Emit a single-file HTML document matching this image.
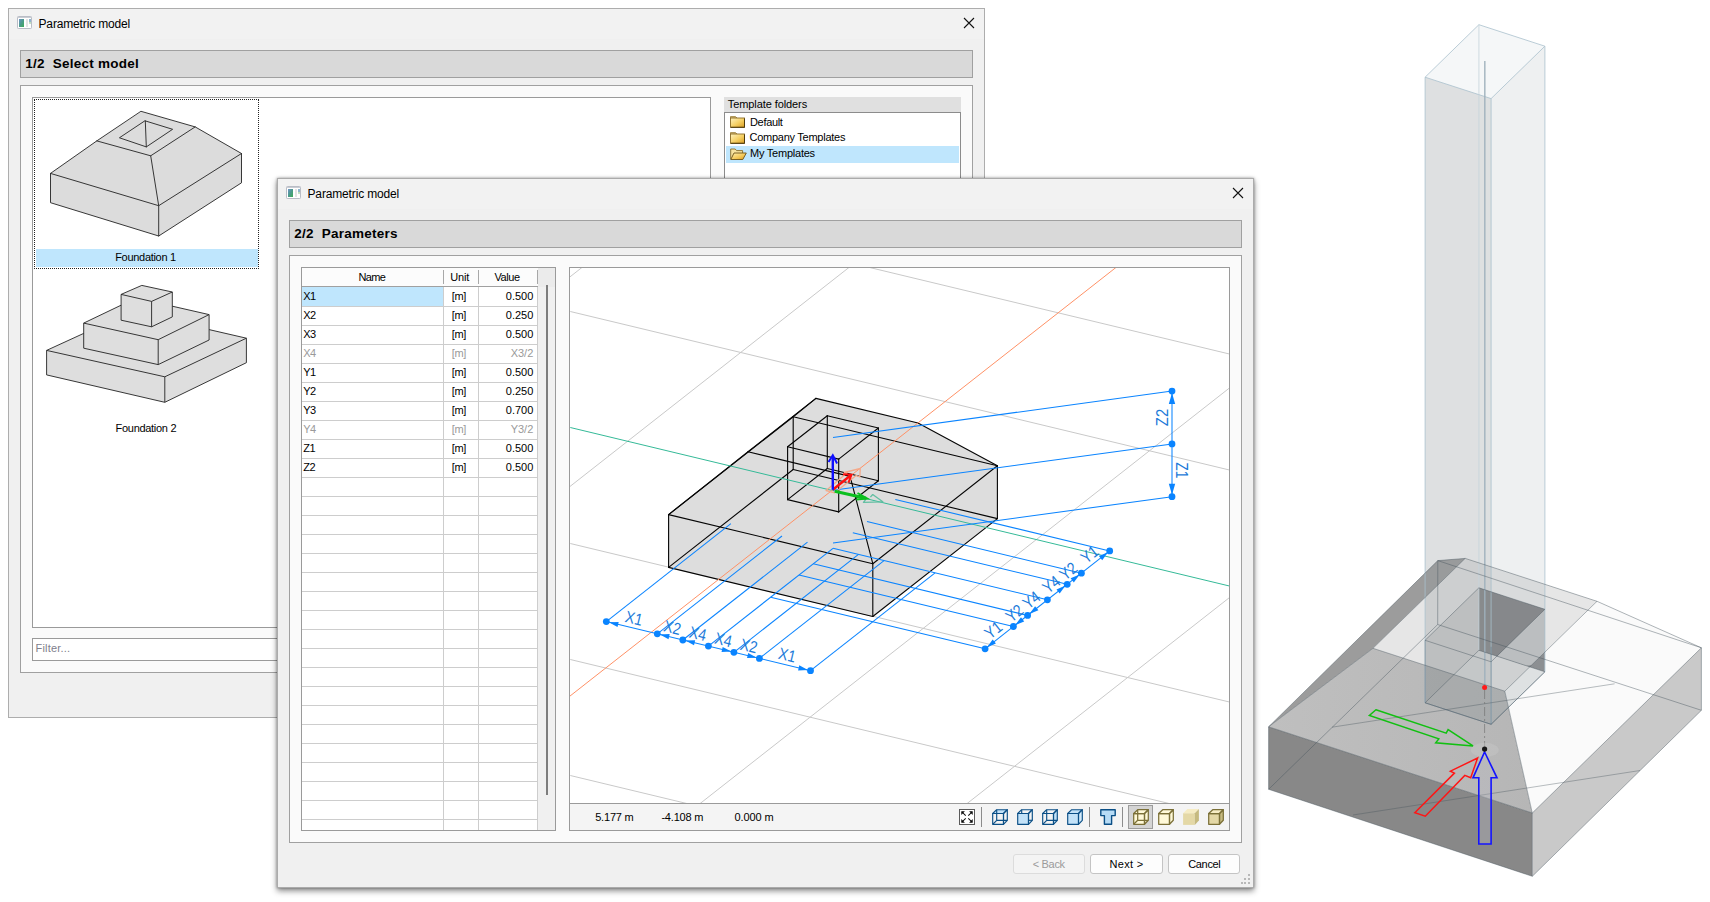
<!DOCTYPE html><html><head><meta charset="utf-8"><title>Parametric model</title><style>
*{box-sizing:border-box;margin:0;padding:0}
html,body{width:1710px;height:902px;overflow:hidden;background:#fff}
body{position:relative;font-family:"Liberation Sans",sans-serif;font-size:11px;color:#000}
.abs{position:absolute}
.dlg{position:absolute;width:977px;height:710px;background:#f0f0f0;border:1px solid #adadad}
.dlg .tb{position:absolute;left:0;top:0;width:975px;height:30px;background:#f2f2f2}
.dlg .ttl{position:absolute;left:29.5px;top:7.7px;font-size:12px;line-height:14px;letter-spacing:-0.15px;color:#000;white-space:nowrap}
.dlg .cls{position:absolute;left:954px;top:9px;width:12px;height:12px}
.hdr{position:absolute;left:11px;top:41px;width:953px;height:28px;background:#d9d9d9;border:1px solid #a0a0a0}
.hdr span{position:absolute;left:4.3px;top:4.5px;font-size:13.5px;line-height:16px;font-weight:bold;white-space:pre;letter-spacing:0.25px}
.grp{position:absolute;left:11px;top:76px;width:953px;height:588px;background:#fafafa;border:1px solid #a0a0a0}
.t{position:absolute;white-space:pre;line-height:13px;font-size:11px}
.btn{position:absolute;top:675px;width:72.3px;height:20px;border:1px solid #c4c4c4;border-radius:3px;background:#fdfdfd;text-align:center;line-height:18px;font-size:11px}
</style></head><body><div class="dlg" style="left:8px;top:8px"><div class="tb"></div><svg class="abs" style="left:8px;top:7px" width="16" height="14" viewBox="0 0 16 14"><defs><linearGradient id="ig1" x1="0" y1="0" x2="1" y2="1"><stop offset="0" stop-color="#6f92c6"/><stop offset="0.5" stop-color="#4b9a8c"/><stop offset="1" stop-color="#3fae55"/></linearGradient></defs><rect x="0.5" y="0.5" width="14" height="12" rx="0.8" fill="#fff" stroke="#b9bdc6"/><rect x="1" y="1" width="13" height="1" fill="#c9ccd3"/><rect x="2" y="3" width="5" height="8" fill="url(#ig1)"/><rect x="9" y="3" width="2" height="8" fill="#e4e4e4"/><rect x="12" y="3" width="2" height="4.5" fill="#8fb4cf"/><rect x="12" y="6" width="2" height="1.5" fill="#bfe3b4"/></svg><div class="ttl">Parametric model</div><svg class="cls" style="top:8px" viewBox="0 0 12 12"><path d="M1 1 L11 11 M11 1 L1 11" stroke="#111" stroke-width="1.08" fill="none"/></svg><div class="hdr"><span>1/2  Select model</span></div><div class="grp"></div><div class="abs" style="left:23px;top:88px;width:679px;height:531px;background:#fff;border:1px solid #9a9a9a"></div><div class="abs" style="left:27px;top:240px;width:221.5px;height:18px;background:#bfe6fd"></div><div class="abs" style="left:25px;top:90px;width:225px;height:170px;border:1px dotted #222"></div><div class="t" style="left:106.2px;top:242.3px;letter-spacing:-0.3px">Foundation 1</div><div class="t" style="left:106.6px;top:412.6px;letter-spacing:-0.3px">Foundation 2</div><svg class="abs" style="left:0;top:0" width="300" height="420"><polygon points="132.3,102.4 186.2,117.9 232.5,144.5 232.5,173.8 149.7,227.0 41.5,193.7 41.5,164.4 87.8,131.9" fill="#dcdcdc"/><g fill="none" stroke="#222" stroke-width="0.9" stroke-linejoin="round" stroke-linecap="round"><polygon points="132.3,102.4 186.2,117.9 232.5,144.5 232.5,173.8 149.7,227.0 41.5,193.7 41.5,164.4 87.8,131.9"/><polyline points="87.8,131.9 141.7,146.8 186.2,117.9"/><polyline points="41.5,164.4 149.7,196.7 232.5,144.5"/><polyline points="141.7,146.8 149.7,196.7 149.7,227.0"/><polygon points="136.3,111.9 163.6,120.3 137.3,137.9 110.8,128.9"/><polyline points="136.3,111.9 137.3,137.9"/></g><g fill="#dedede" stroke="#222" stroke-width="0.9" stroke-linejoin="round"><polygon points="37.6,341.4 74.7,324.4 200.1,320.6 237.4,329.2 237.4,353.7 155.8,393.3 37.6,365.9"/><polyline fill="none" points="37.6,341.4 155.8,367.8 237.4,329.2"/><polyline fill="none" points="155.8,367.8 155.8,393.3"/><polygon points="74.7,314.1 112.1,296.2 163.3,297.2 200.1,305.6 200.1,331.0 149.2,355.6 74.7,339.2"/><polyline fill="none" points="74.7,314.1 149.2,330.7 200.1,305.6"/><polyline fill="none" points="149.2,330.7 149.2,355.6"/><polygon points="112.1,285.4 132.8,276.4 163.3,283.0 163.3,307.9 142.6,317.8 112.1,311.2"/><polyline fill="none" points="112.1,285.4 142.6,292.4 163.3,283.0"/><polyline fill="none" points="142.6,292.4 142.6,317.8"/></g></svg><div class="abs" style="left:23px;top:629px;width:679px;height:23px;background:#fff;border:1px solid #9a9a9a"></div><div class="t" style="left:26.5px;top:632.8px;color:#80808c;letter-spacing:0.2px">Filter...</div><div class="abs" style="left:715px;top:88px;width:237px;height:16px;background:#e0e0e0"></div><div class="t" style="left:718.8px;top:89.4px;letter-spacing:-0.09px">Template folders</div><div class="abs" style="left:715px;top:103px;width:237px;height:200px;background:#fff;border:1px solid #8c8c8c"></div><div class="abs" style="left:717px;top:137px;width:233px;height:17px;background:#bfe6fd"></div><svg class="abs" style="left:720.5px;top:106.3px" width="16" height="14" viewBox="0 0 16 14"><defs><linearGradient id="fg1" x1="0" y1="0" x2="1" y2="1"><stop offset="0" stop-color="#fff3bf"/><stop offset="0.55" stop-color="#f5cf62"/><stop offset="1" stop-color="#d99d22"/></linearGradient></defs><path d="M0.5 1.5 L5.5 1.5 L7 3 L0.5 3 Z" fill="#f3dc9a" stroke="#9c8140" stroke-width="0.8"/><rect x="0.5" y="3" width="14" height="9.3" fill="url(#fg1)" stroke="#8a6b24" stroke-width="0.9"/><path d="M0.8 12.3 L14.5 12.3 M14.5 3.5 L14.5 12.3" stroke="#4e3a0c" stroke-width="1"/></svg><svg class="abs" style="left:720.5px;top:122.1px" width="16" height="14" viewBox="0 0 16 14"><defs><linearGradient id="fg2" x1="0" y1="0" x2="1" y2="1"><stop offset="0" stop-color="#fff3bf"/><stop offset="0.55" stop-color="#f5cf62"/><stop offset="1" stop-color="#d99d22"/></linearGradient></defs><path d="M0.5 1.5 L5.5 1.5 L7 3 L0.5 3 Z" fill="#f3dc9a" stroke="#9c8140" stroke-width="0.8"/><rect x="0.5" y="3" width="14" height="9.3" fill="url(#fg2)" stroke="#8a6b24" stroke-width="0.9"/><path d="M0.8 12.3 L14.5 12.3 M14.5 3.5 L14.5 12.3" stroke="#4e3a0c" stroke-width="1"/></svg><svg class="abs" style="left:720.5px;top:137.9px" width="17" height="14" viewBox="0 0 17 14"><defs><linearGradient id="fg3" x1="0" y1="0" x2="1" y2="1"><stop offset="0" stop-color="#fff0b0"/><stop offset="0.6" stop-color="#f3c654"/><stop offset="1" stop-color="#d3941c"/></linearGradient></defs><path d="M0.7 12.3 L0.7 2 L5.2 2 L6.6 3.6 L12.6 3.6 L12.6 6" fill="#f7e3a0" stroke="#8a6b24" stroke-width="0.9"/><path d="M0.8 12.5 L4 6 L16.3 6 L12.8 12.5 Z" fill="url(#fg3)" stroke="#6e5216" stroke-width="0.9"/></svg><div class="t" style="left:741px;top:106.5px;letter-spacing:-0.33px">Default</div><div class="t" style="left:740.5px;top:122.30000000000001px;letter-spacing:-0.26px">Company Templates</div><div class="t" style="left:741px;top:138.1px;letter-spacing:-0.23px">My Templates</div></div><svg class="abs" style="left:1255px;top:0" width="455" height="902" viewBox="1255 0 455 902"><defs><linearGradient id="f7g" x1="0" y1="0" x2="1" y2="0"><stop offset="0" stop-color="#e4e4e4"/><stop offset="0.6" stop-color="#f6f6f6"/><stop offset="1" stop-color="#fdfdfd"/></linearGradient><linearGradient id="f3g" x1="0" y1="0" x2="1" y2="0"><stop offset="0" stop-color="#bfbfbf"/><stop offset="1" stop-color="#b6b6b6"/></linearGradient></defs><polygon points="1437.8,560.6 1701.4,647.8 1597.0,601.3 1465.2,558.4" fill="url(#f7g)" /><polygon points="1268.6,726.8 1437.8,560.6 1465.2,558.4 1373.0,648.3" fill="#9c9c9c" /><polygon points="1373.0,648.3 1504.8,691.2 1597.0,601.3 1465.2,558.4" fill="#e6e6e6" /><polygon points="1268.6,726.8 1373.0,648.3 1504.8,691.2 1532.3,813.0" fill="url(#f3g)" /><polygon points="1532.3,813.0 1504.8,691.2 1597.0,601.3 1701.4,647.8" fill="#fafafa" /><polygon points="1268.6,726.8 1532.3,813.0 1532.3,876.3 1268.6,789.3" fill="#888888" /><polygon points="1532.3,813.0 1701.4,647.8 1701.4,710.3 1532.3,876.3" fill="#c9c9c9" /><polygon points="1425.1,640.3 1478.9,587.8 1478.9,650.3 1425.1,702.8" fill="rgba(96,100,102,0.17)" /><polygon points="1478.9,587.8 1544.9,609.3 1544.9,671.8 1478.9,650.3" fill="rgba(58,60,64,0.58)" /><polygon points="1497.0,656.3 1544.9,609.3 1544.9,652.2 1531.5,665.3 1525.8,665.7" fill="rgba(255,255,255,0.52)" /><polygon points="1425.1,702.8 1491.1,724.3 1544.9,671.8 1478.9,650.3" fill="rgba(120,124,126,0.10)" /><polygon points="1425.1,702.8 1491.1,724.3 1491.1,98.6 1425.1,77.2" fill="rgba(150,155,158,0.31)" /><polygon points="1491.1,724.3 1544.9,671.8 1544.9,46.2 1491.1,98.6" fill="rgba(150,162,166,0.16)" /><polygon points="1425.1,77.2 1491.1,98.6 1544.9,46.2 1478.9,24.7" fill="rgba(160,185,190,0.11)" /><g stroke="#a9c0cd" stroke-width="0.8" fill="none"><line x1="1425.1" y1="702.8" x2="1425.1" y2="77.2"/><line x1="1491.1" y1="724.3" x2="1491.1" y2="98.6"/><line x1="1544.9" y1="671.8" x2="1544.9" y2="46.2"/><line x1="1425.1" y1="77.2" x2="1491.1" y2="98.6"/><line x1="1491.1" y1="98.6" x2="1544.9" y2="46.2"/><line x1="1544.9" y1="46.2" x2="1478.9" y2="24.7"/><line x1="1478.9" y1="24.7" x2="1425.1" y2="77.2"/></g><g stroke="#c4d3db" stroke-width="0.8" fill="none"><line x1="1478.9" y1="650.3" x2="1478.9" y2="24.7"/></g><line x1="1484.8" y1="61" x2="1484.8" y2="687" stroke="#9fb1bd" stroke-width="1.6" opacity="0.85"/><g stroke="rgba(70,84,92,0.62)" stroke-width="0.7" fill="none"><line x1="1268.6" y1="789.3" x2="1532.3" y2="876.3"/><line x1="1268.6" y1="726.8" x2="1532.3" y2="813.0"/><line x1="1532.3" y1="876.3" x2="1701.4" y2="710.3"/><line x1="1532.3" y1="813.0" x2="1701.4" y2="647.8"/><line x1="1701.4" y1="710.3" x2="1437.7" y2="624.5"/><line x1="1701.4" y1="647.8" x2="1437.8" y2="560.6"/><line x1="1437.7" y1="624.5" x2="1268.6" y2="789.3"/><line x1="1437.8" y1="560.6" x2="1268.6" y2="726.8"/><line x1="1268.6" y1="789.3" x2="1268.6" y2="726.8"/><line x1="1532.3" y1="876.3" x2="1532.3" y2="813.0"/><line x1="1701.4" y1="710.3" x2="1701.4" y2="647.8"/><line x1="1437.7" y1="624.5" x2="1437.8" y2="560.6"/><line x1="1373.0" y1="648.3" x2="1504.8" y2="691.2"/><line x1="1504.8" y1="691.2" x2="1597.0" y2="601.3"/><line x1="1597.0" y1="601.3" x2="1465.2" y2="558.4"/><line x1="1465.2" y1="558.4" x2="1373.0" y2="648.3"/><line x1="1268.6" y1="726.8" x2="1373.0" y2="648.3"/><line x1="1532.3" y1="813.0" x2="1504.8" y2="691.2"/><line x1="1701.4" y1="647.8" x2="1597.0" y2="601.3"/><line x1="1437.8" y1="560.6" x2="1465.2" y2="558.4"/><line x1="1425.1" y1="702.8" x2="1491.1" y2="724.3"/><line x1="1425.1" y1="640.3" x2="1491.1" y2="661.8"/><line x1="1491.1" y1="724.3" x2="1544.9" y2="671.8"/><line x1="1491.1" y1="661.8" x2="1544.9" y2="609.3"/><line x1="1544.9" y1="671.8" x2="1478.9" y2="650.3"/><line x1="1544.9" y1="609.3" x2="1478.9" y2="587.8"/><line x1="1478.9" y1="650.3" x2="1425.1" y2="702.8"/><line x1="1478.9" y1="587.8" x2="1425.1" y2="640.3"/></g><g stroke="rgba(70,84,92,0.55)" stroke-width="0.7" fill="none"><line x1="1332.0" y1="727.2" x2="1614.6" y2="683.8"/><line x1="1353.0" y1="815.0" x2="1640.0" y2="770.5"/></g><g stroke="rgba(80,104,120,0.55)" stroke-width="0.8" fill="none"><line x1="1425.1" y1="702.8" x2="1491.1" y2="724.3"/><line x1="1491.1" y1="724.3" x2="1544.9" y2="671.8"/><line x1="1491.1" y1="724.3" x2="1491.1" y2="646.8"/><line x1="1425.1" y1="702.8" x2="1425.1" y2="640.3"/></g><line x1="1484.6" y1="690" x2="1484.6" y2="747" stroke="#777" stroke-width="0.9" stroke-dasharray="9 3 2 3" opacity="0.8"/><ellipse cx="1484.8" cy="750" rx="14" ry="7.2" fill="rgba(200,200,200,0.42)"/><polygon points="1375.9,709.8 1446.2,733.1 1448.1,729.6 1473,745.9 1435.7,742.8 1438.8,738.9 1369.4,715.4" fill="none" stroke="#11c011" stroke-width="1.5" stroke-linejoin="miter"/><polygon points="1414.8,812.7 1454.4,773.1 1450.4,771.2 1477.6,758 1470.7,777.8 1464.8,775.4 1425.3,816.2" fill="none" stroke="#ff1515" stroke-width="1.5"/><polygon points="1484.6,752 1497,777.8 1491.1,777.8 1491.1,844 1478.8,844 1478.8,777.8 1473,777.8" fill="rgba(185,185,195,0.35)" stroke="#1414ff" stroke-width="1.6"/><circle cx="1484.6" cy="749.1" r="2.6" fill="#181818"/><circle cx="1484.6" cy="687.4" r="2.5" fill="#ff1a1a"/></svg><div class="dlg" style="left:277px;top:178px;border-color:#ababab;box-shadow:0 3px 6px 0 rgba(0,0,0,0.45), 0 0 2.5px rgba(0,0,0,0.35)"><div class="tb"></div><svg class="abs" style="left:8px;top:7px" width="16" height="14" viewBox="0 0 16 14"><defs><linearGradient id="ig2" x1="0" y1="0" x2="1" y2="1"><stop offset="0" stop-color="#6f92c6"/><stop offset="0.5" stop-color="#4b9a8c"/><stop offset="1" stop-color="#3fae55"/></linearGradient></defs><rect x="0.5" y="0.5" width="14" height="12" rx="0.8" fill="#fff" stroke="#b9bdc6"/><rect x="1" y="1" width="13" height="1" fill="#c9ccd3"/><rect x="2" y="3" width="5" height="8" fill="url(#ig2)"/><rect x="9" y="3" width="2" height="8" fill="#e4e4e4"/><rect x="12" y="3" width="2" height="4.5" fill="#8fb4cf"/><rect x="12" y="6" width="2" height="1.5" fill="#bfe3b4"/></svg><div class="ttl">Parametric model</div><svg class="cls" style="top:8px" viewBox="0 0 12 12"><path d="M1 1 L11 11 M11 1 L1 11" stroke="#111" stroke-width="1.08" fill="none"/></svg><div class="hdr"><span>2/2  Parameters</span></div><div class="grp"></div><div class="abs" style="left:23px;top:88px;width:255px;height:564px;background:#fff;border:1px solid #9a9a9a"></div><div class="abs" style="left:24px;top:89px;width:236px;height:18px;background:#fcfcfc"></div><div class="abs" style="left:260px;top:89px;width:17px;height:19px;background:#ebebeb"></div><div class="abs" style="left:260px;top:108px;width:17px;height:543px;background:#f0f0f0"></div><div class="abs" style="left:24px;top:107px;width:236px;height:1px;background:#a0a0a0"></div><div class="abs" style="left:165px;top:91px;width:1px;height:14px;background:#a8a8a8"></div><div class="abs" style="left:200px;top:91px;width:1px;height:14px;background:#a8a8a8"></div><div class="abs" style="left:259px;top:91px;width:1px;height:14px;background:#a8a8a8"></div><div class="abs" style="left:24px;top:108px;width:141px;height:19px;background:#bfe6fd"></div><div class="abs" style="left:24px;top:127px;width:236px;height:1px;background:#cdcdcd"></div><div class="abs" style="left:24px;top:146px;width:236px;height:1px;background:#cdcdcd"></div><div class="abs" style="left:24px;top:165px;width:236px;height:1px;background:#cdcdcd"></div><div class="abs" style="left:24px;top:184px;width:236px;height:1px;background:#cdcdcd"></div><div class="abs" style="left:24px;top:203px;width:236px;height:1px;background:#cdcdcd"></div><div class="abs" style="left:24px;top:222px;width:236px;height:1px;background:#cdcdcd"></div><div class="abs" style="left:24px;top:241px;width:236px;height:1px;background:#cdcdcd"></div><div class="abs" style="left:24px;top:260px;width:236px;height:1px;background:#cdcdcd"></div><div class="abs" style="left:24px;top:279px;width:236px;height:1px;background:#cdcdcd"></div><div class="abs" style="left:24px;top:298px;width:236px;height:1px;background:#cdcdcd"></div><div class="abs" style="left:24px;top:317px;width:236px;height:1px;background:#cdcdcd"></div><div class="abs" style="left:24px;top:336px;width:236px;height:1px;background:#cdcdcd"></div><div class="abs" style="left:24px;top:355px;width:236px;height:1px;background:#cdcdcd"></div><div class="abs" style="left:24px;top:374px;width:236px;height:1px;background:#cdcdcd"></div><div class="abs" style="left:24px;top:393px;width:236px;height:1px;background:#cdcdcd"></div><div class="abs" style="left:24px;top:412px;width:236px;height:1px;background:#cdcdcd"></div><div class="abs" style="left:24px;top:431px;width:236px;height:1px;background:#cdcdcd"></div><div class="abs" style="left:24px;top:450px;width:236px;height:1px;background:#cdcdcd"></div><div class="abs" style="left:24px;top:469px;width:236px;height:1px;background:#cdcdcd"></div><div class="abs" style="left:24px;top:488px;width:236px;height:1px;background:#cdcdcd"></div><div class="abs" style="left:24px;top:507px;width:236px;height:1px;background:#cdcdcd"></div><div class="abs" style="left:24px;top:526px;width:236px;height:1px;background:#cdcdcd"></div><div class="abs" style="left:24px;top:545px;width:236px;height:1px;background:#cdcdcd"></div><div class="abs" style="left:24px;top:564px;width:236px;height:1px;background:#cdcdcd"></div><div class="abs" style="left:24px;top:583px;width:236px;height:1px;background:#cdcdcd"></div><div class="abs" style="left:24px;top:602px;width:236px;height:1px;background:#cdcdcd"></div><div class="abs" style="left:24px;top:621px;width:236px;height:1px;background:#cdcdcd"></div><div class="abs" style="left:24px;top:640px;width:236px;height:1px;background:#cdcdcd"></div><div class="abs" style="left:165px;top:108px;width:1px;height:543px;background:#cdcdcd"></div><div class="abs" style="left:200px;top:108px;width:1px;height:543px;background:#cdcdcd"></div><div class="abs" style="left:259px;top:108px;width:1px;height:543px;background:#cdcdcd"></div><div class="abs" style="left:268px;top:106px;width:2px;height:510px;background:#7d7d7d"></div><div class="t" style="left:80.39999999999998px;top:91.60000000000002px;letter-spacing:-0.6px">Name</div><div class="t" style="left:172.2px;top:91.60000000000002px;letter-spacing:-0.15px">Unit</div><div class="t" style="left:216.39999999999998px;top:91.60000000000002px;letter-spacing:-0.4px">Value</div><div class="t" style="left:25.30000000000001px;top:110.60000000000002px;letter-spacing:-0.55px">X1</div><div class="t" style="left:173.8px;top:110.60000000000002px;letter-spacing:-0.33px">[m]</div><div class="t" style="left:200px;top:110.60000000000002px;width:55.3px;text-align:right;letter-spacing:0px">0.500</div><div class="t" style="left:25.30000000000001px;top:129.60000000000002px;letter-spacing:-0.55px">X2</div><div class="t" style="left:173.8px;top:129.60000000000002px;letter-spacing:-0.33px">[m]</div><div class="t" style="left:200px;top:129.60000000000002px;width:55.3px;text-align:right;letter-spacing:0px">0.250</div><div class="t" style="left:25.30000000000001px;top:148.60000000000002px;letter-spacing:-0.55px">X3</div><div class="t" style="left:173.8px;top:148.60000000000002px;letter-spacing:-0.33px">[m]</div><div class="t" style="left:200px;top:148.60000000000002px;width:55.3px;text-align:right;letter-spacing:0px">0.500</div><div class="t" style="left:25.30000000000001px;top:167.60000000000002px;color:#9a9a9a;letter-spacing:-0.55px">X4</div><div class="t" style="left:173.8px;top:167.60000000000002px;color:#9a9a9a;letter-spacing:-0.33px">[m]</div><div class="t" style="left:200px;top:167.60000000000002px;width:55.3px;text-align:right;color:#9a9a9a;letter-spacing:0px">X3/2</div><div class="t" style="left:25.30000000000001px;top:186.60000000000002px;letter-spacing:-0.55px">Y1</div><div class="t" style="left:173.8px;top:186.60000000000002px;letter-spacing:-0.33px">[m]</div><div class="t" style="left:200px;top:186.60000000000002px;width:55.3px;text-align:right;letter-spacing:0px">0.500</div><div class="t" style="left:25.30000000000001px;top:205.60000000000002px;letter-spacing:-0.55px">Y2</div><div class="t" style="left:173.8px;top:205.60000000000002px;letter-spacing:-0.33px">[m]</div><div class="t" style="left:200px;top:205.60000000000002px;width:55.3px;text-align:right;letter-spacing:0px">0.250</div><div class="t" style="left:25.30000000000001px;top:224.60000000000002px;letter-spacing:-0.55px">Y3</div><div class="t" style="left:173.8px;top:224.60000000000002px;letter-spacing:-0.33px">[m]</div><div class="t" style="left:200px;top:224.60000000000002px;width:55.3px;text-align:right;letter-spacing:0px">0.700</div><div class="t" style="left:25.30000000000001px;top:243.60000000000002px;color:#9a9a9a;letter-spacing:-0.55px">Y4</div><div class="t" style="left:173.8px;top:243.60000000000002px;color:#9a9a9a;letter-spacing:-0.33px">[m]</div><div class="t" style="left:200px;top:243.60000000000002px;width:55.3px;text-align:right;color:#9a9a9a;letter-spacing:0px">Y3/2</div><div class="t" style="left:25.30000000000001px;top:262.6px;letter-spacing:-0.55px">Z1</div><div class="t" style="left:173.8px;top:262.6px;letter-spacing:-0.33px">[m]</div><div class="t" style="left:200px;top:262.6px;width:55.3px;text-align:right;letter-spacing:0px">0.500</div><div class="t" style="left:25.30000000000001px;top:281.6px;letter-spacing:-0.55px">Z2</div><div class="t" style="left:173.8px;top:281.6px;letter-spacing:-0.33px">[m]</div><div class="t" style="left:200px;top:281.6px;width:55.3px;text-align:right;letter-spacing:0px">0.500</div><div class="abs" style="left:291px;top:88px;width:661px;height:564px;background:#fff;border:1px solid #9a9a9a"></div><svg class="abs" style="left:292px;top:89px" width="659" height="535" viewBox="570 268 659 535"><g stroke="#c9c9c9" stroke-width="1" fill="none"><line x1="570.3" y1="195.5" x2="1229.4" y2="354.0" /><line x1="570.3" y1="311.5" x2="1229.4" y2="470.0" /><line x1="570.3" y1="543.5" x2="1229.4" y2="702.0" /><line x1="570.3" y1="659.5" x2="1229.4" y2="818.0" /><line x1="570.3" y1="775.5" x2="1229.4" y2="934.0" /><line x1="560.0" y1="284.7" x2="1240.0" y2="-249.1" /><line x1="560.0" y1="494.3" x2="1240.0" y2="-39.5" /><line x1="560.0" y1="913.5" x2="1240.0" y2="379.7" /><line x1="560.0" y1="1123.1" x2="1240.0" y2="589.3" /></g><polygon points="668.6,567.4 872.8,616.5 997.4,518.6 997.4,465.8 918.0,423.0 815.9,398.4 748.0,451.8 668.6,514.6" fill="#dddddd"/><g stroke="#050505" stroke-width="1.12" fill="none" stroke-linecap="round"><line x1="668.6" y1="567.4" x2="872.8" y2="616.5" /><line x1="668.6" y1="514.6" x2="872.8" y2="563.7" /><line x1="872.8" y1="616.5" x2="997.4" y2="518.6" /><line x1="872.8" y1="563.7" x2="997.4" y2="465.8" /><line x1="997.4" y1="518.6" x2="793.2" y2="469.5" /><line x1="997.4" y1="465.8" x2="793.2" y2="416.7" /><line x1="793.2" y1="469.5" x2="668.6" y2="567.4" /><line x1="793.2" y1="416.7" x2="668.6" y2="514.6" /><line x1="668.6" y1="567.4" x2="668.6" y2="514.6" /><line x1="872.8" y1="616.5" x2="872.8" y2="563.7" /><line x1="997.4" y1="518.6" x2="997.4" y2="465.8" /><line x1="793.2" y1="469.5" x2="793.2" y2="416.7" /><line x1="748.0" y1="451.8" x2="850.1" y2="476.4" /><line x1="918.0" y1="423.0" x2="815.9" y2="398.4" /><line x1="815.9" y1="398.4" x2="748.0" y2="451.8" /><line x1="668.6" y1="514.6" x2="748.0" y2="451.8" /><line x1="872.8" y1="563.7" x2="850.1" y2="476.4" /><line x1="997.4" y1="465.8" x2="918.0" y2="423.0" /><line x1="793.2" y1="416.7" x2="815.9" y2="398.4" /><line x1="787.6" y1="499.6" x2="838.7" y2="511.9" /><line x1="787.6" y1="446.8" x2="838.7" y2="459.1" /><line x1="787.6" y1="499.6" x2="787.6" y2="446.8" /><line x1="838.7" y1="511.9" x2="878.4" y2="480.8" /><line x1="838.7" y1="459.1" x2="878.4" y2="428.0" /><line x1="838.7" y1="511.9" x2="838.7" y2="459.1" /><line x1="878.4" y1="480.8" x2="827.3" y2="468.5" /><line x1="878.4" y1="428.0" x2="827.3" y2="415.7" /><line x1="878.4" y1="480.8" x2="878.4" y2="428.0" /><line x1="827.3" y1="468.5" x2="787.6" y2="499.6" /><line x1="827.3" y1="415.7" x2="787.6" y2="446.8" /><line x1="827.3" y1="468.5" x2="827.3" y2="415.7" /></g><line x1="570.3" y1="427.5" x2="1229.4" y2="586.0" stroke="#35ba98" stroke-width="1.0"/><line x1="560.0" y1="703.9" x2="1240.0" y2="170.1" stroke="#ff9166" stroke-width="1.0"/><g stroke="#0a84ff" stroke-width="1.05" fill="none"><line x1="606.3" y1="621.6" x2="730.9" y2="523.7" /><line x1="657.3" y1="633.8" x2="782.0" y2="536.0" /><line x1="682.8" y1="640.0" x2="807.5" y2="542.1" /><line x1="708.4" y1="646.1" x2="833.0" y2="548.3" /><line x1="733.9" y1="652.3" x2="858.5" y2="554.4" /><line x1="759.4" y1="658.4" x2="884.0" y2="560.6" /><line x1="810.5" y1="670.7" x2="935.1" y2="572.8" /><line x1="985.1" y1="648.8" x2="770.7" y2="597.2" /><line x1="1013.4" y1="626.5" x2="799.0" y2="575.0" /><line x1="1027.6" y1="615.4" x2="813.2" y2="563.8" /><line x1="1047.4" y1="599.8" x2="833.0" y2="548.3" /><line x1="1067.2" y1="584.3" x2="852.8" y2="532.7" /><line x1="1081.4" y1="573.2" x2="867.0" y2="521.6" /><line x1="1109.7" y1="550.9" x2="895.3" y2="499.4" /><line x1="606.3" y1="621.6" x2="810.5" y2="670.7" /><line x1="985.1" y1="648.8" x2="1109.7" y2="550.9" /><line x1="1172.0" y1="496.7" x2="833.0" y2="543.0" /><line x1="1172.0" y1="443.9" x2="833.0" y2="490.2" /><line x1="1172.0" y1="391.1" x2="833.0" y2="437.4" /><line x1="1172.0" y1="496.7" x2="1172.0" y2="391.1" /></g><circle cx="606.3" cy="621.6" r="3.4" fill="#0a84ff"/><circle cx="657.3" cy="633.8" r="3.4" fill="#0a84ff"/><circle cx="682.8" cy="640.0" r="3.4" fill="#0a84ff"/><circle cx="708.4" cy="646.1" r="3.4" fill="#0a84ff"/><circle cx="733.9" cy="652.3" r="3.4" fill="#0a84ff"/><circle cx="759.4" cy="658.4" r="3.4" fill="#0a84ff"/><circle cx="810.5" cy="670.7" r="3.4" fill="#0a84ff"/><circle cx="985.1" cy="648.8" r="3.4" fill="#0a84ff"/><circle cx="1013.4" cy="626.5" r="3.4" fill="#0a84ff"/><circle cx="1027.6" cy="615.4" r="3.4" fill="#0a84ff"/><circle cx="1047.4" cy="599.8" r="3.4" fill="#0a84ff"/><circle cx="1067.2" cy="584.3" r="3.4" fill="#0a84ff"/><circle cx="1081.4" cy="573.2" r="3.4" fill="#0a84ff"/><circle cx="1109.7" cy="550.9" r="3.4" fill="#0a84ff"/><circle cx="1172.0" cy="496.7" r="3.4" fill="#0a84ff"/><circle cx="1172.0" cy="443.9" r="3.4" fill="#0a84ff"/><circle cx="1172.0" cy="391.1" r="3.4" fill="#0a84ff"/><polygon points="608.8,622.2 618.7,621.9 617.5,626.9" fill="#0a84ff"/><polygon points="659.9,634.5 669.7,634.1 668.5,639.2" fill="#0a84ff"/><polygon points="685.4,640.6 695.2,640.3 694.0,645.3" fill="#0a84ff"/><polygon points="731.3,651.6 721.5,651.9 722.7,646.9" fill="#0a84ff"/><polygon points="756.9,657.8 747.0,658.1 748.2,653.0" fill="#0a84ff"/><polygon points="807.9,670.1 798.1,670.4 799.3,665.3" fill="#0a84ff"/><polygon points="986.8,647.4 992.7,639.5 995.9,643.6" fill="#0a84ff"/><polygon points="1015.1,625.2 1021.0,617.3 1024.2,621.4" fill="#0a84ff"/><polygon points="1029.3,614.1 1035.1,606.2 1038.4,610.2" fill="#0a84ff"/><polygon points="1065.5,585.6 1059.7,593.5 1056.5,589.4" fill="#0a84ff"/><polygon points="1079.7,574.5 1073.8,582.4 1070.6,578.3" fill="#0a84ff"/><polygon points="1108.0,552.3 1102.2,560.2 1098.9,556.1" fill="#0a84ff"/><polygon points="1172.0,393.1 1175.2,404.1 1168.8,404.1" fill="#0a84ff"/><polygon points="1172.0,494.7 1168.8,483.7 1175.2,483.7" fill="#0a84ff"/><text x="632.7" y="623.8" transform="rotate(13.5 632.7 623.8)" text-anchor="middle" font-family="Liberation Sans, sans-serif" font-size="16.5" fill="#1c7ad9" textLength="17.2" lengthAdjust="spacingAndGlyphs">X1</text><text x="671.0" y="633.0" transform="rotate(13.5 671.0 633.0)" text-anchor="middle" font-family="Liberation Sans, sans-serif" font-size="16.5" fill="#1c7ad9" textLength="17.2" lengthAdjust="spacingAndGlyphs">X2</text><text x="696.5" y="639.2" transform="rotate(13.5 696.5 639.2)" text-anchor="middle" font-family="Liberation Sans, sans-serif" font-size="16.5" fill="#1c7ad9" textLength="17.2" lengthAdjust="spacingAndGlyphs">X4</text><text x="722.1" y="645.3" transform="rotate(13.5 722.1 645.3)" text-anchor="middle" font-family="Liberation Sans, sans-serif" font-size="16.5" fill="#1c7ad9" textLength="17.2" lengthAdjust="spacingAndGlyphs">X4</text><text x="747.6" y="651.4" transform="rotate(13.5 747.6 651.4)" text-anchor="middle" font-family="Liberation Sans, sans-serif" font-size="16.5" fill="#1c7ad9" textLength="17.2" lengthAdjust="spacingAndGlyphs">X2</text><text x="785.9" y="660.6" transform="rotate(13.5 785.9 660.6)" text-anchor="middle" font-family="Liberation Sans, sans-serif" font-size="16.5" fill="#1c7ad9" textLength="17.2" lengthAdjust="spacingAndGlyphs">X1</text><text x="996.8" y="634.5" transform="rotate(-38.1 996.8 634.5)" text-anchor="middle" font-family="Liberation Sans, sans-serif" font-size="16.5" fill="#1c7ad9" textLength="17.2" lengthAdjust="spacingAndGlyphs">Y1</text><text x="1018.0" y="617.8" transform="rotate(-38.1 1018.0 617.8)" text-anchor="middle" font-family="Liberation Sans, sans-serif" font-size="16.5" fill="#1c7ad9" textLength="17.2" lengthAdjust="spacingAndGlyphs">Y2</text><text x="1035.0" y="604.5" transform="rotate(-38.1 1035.0 604.5)" text-anchor="middle" font-family="Liberation Sans, sans-serif" font-size="16.5" fill="#1c7ad9" textLength="17.2" lengthAdjust="spacingAndGlyphs">Y4</text><text x="1054.9" y="588.9" transform="rotate(-38.1 1054.9 588.9)" text-anchor="middle" font-family="Liberation Sans, sans-serif" font-size="16.5" fill="#1c7ad9" textLength="17.2" lengthAdjust="spacingAndGlyphs">Y4</text><text x="1071.8" y="575.6" transform="rotate(-38.1 1071.8 575.6)" text-anchor="middle" font-family="Liberation Sans, sans-serif" font-size="16.5" fill="#1c7ad9" textLength="17.2" lengthAdjust="spacingAndGlyphs">Y2</text><text x="1093.1" y="558.9" transform="rotate(-38.1 1093.1 558.9)" text-anchor="middle" font-family="Liberation Sans, sans-serif" font-size="16.5" fill="#1c7ad9" textLength="17.2" lengthAdjust="spacingAndGlyphs">Y1</text><text x="1168.4" y="417.5" transform="rotate(-90.0 1168.4 417.5)" text-anchor="middle" font-family="Liberation Sans, sans-serif" font-size="16.5" fill="#1c7ad9" textLength="17.3" lengthAdjust="spacingAndGlyphs">Z2</text><text x="1175.6" y="470.3" transform="rotate(90.0 1175.6 470.3)" text-anchor="middle" font-family="Liberation Sans, sans-serif" font-size="16.5" fill="#1c7ad9" textLength="16.2" lengthAdjust="spacingAndGlyphs">Z1</text><path d="M826.1 490.5 L847.1 472.8 L844.3 472.5 L860.3 468.5 L859.8 477 L856.1 475.4 L834.7 492.8 Z" fill="none" stroke="#f4a98a" stroke-width="1.3" stroke-linejoin="round"/><path d="M872.7 494.5 L882.8 501.8 L863.4 502.3 L866.5 498.6 M872.7 494.5 L870.4 497.2" fill="none" stroke="#62bfa2" stroke-width="1.3" stroke-linejoin="round"/><path d="M834.8 491.3 L866 498.2" stroke="#0bbf1f" stroke-width="3" fill="none"/><path d="M857.5 493 L867.2 498.6 L856.3 499.6" fill="none" stroke="#0bbf1f" stroke-width="2"/><path d="M832.8 489.8 L850.8 475.2" stroke="#ff1010" stroke-width="2.4" fill="none"/><path d="M843 474.3 L851.5 474.6 L848.5 482.5" fill="none" stroke="#ff1010" stroke-width="2"/><path d="M832.8 489.8 L832.8 456" stroke="#1010ff" stroke-width="2.4" fill="none"/><path d="M828.5 462 L832.8 455.3 L837.0999999999999 463.5" fill="none" stroke="#1010ff" stroke-width="2"/></svg><div class="abs" style="left:292px;top:624px;width:659px;height:1px;background:#9a9a9a"></div><div class="abs" style="left:292px;top:625px;width:659px;height:26px;background:#f4f4f4"></div><div class="t" style="left:317.20000000000005px;top:632px;letter-spacing:-0.2px">5.177 m</div><div class="t" style="left:383.4px;top:632px;letter-spacing:-0.2px">-4.108 m</div><div class="t" style="left:456.6px;top:632px;letter-spacing:-0.1px">0.000 m</div><svg class="abs" style="left:681px;top:630px" width="16" height="16" viewBox="0 0 16 16"><rect x="0.5" y="0.5" width="15" height="15" fill="#fff" stroke="#5a5a5a"/><g stroke="#0a0a0a" stroke-width="1.05" fill="none" stroke-linecap="butt"><path d="M6.7 6.7 L3 3 M9.3 6.7 L13 3 M6.7 9.3 L3 13 M9.3 9.3 L13 13"/></g><g fill="#0a0a0a"><path d="M2.3 2.3 H5.9 L2.3 5.9 Z M13.7 2.3 V5.9 L10.1 2.3 Z M2.3 13.7 V10.1 L5.9 13.7 Z M13.7 13.7 H10.1 L13.7 10.1 Z"/></g></svg><div class="abs" style="left:703px;top:628px;width:1px;height:20px;background:#8c8c8c"></div><svg class="abs" style="left:714px;top:630px" width="16" height="16" viewBox="0 0 16 16"><polygon points="0.7,4.5 4.7,0.7 15.3,0.7 11.5,4.5" fill="#c3e2f8"/><g fill="none" stroke="#0b4f86" stroke-width="1.15" stroke-linejoin="round"><polygon points="0.7,4.5 11.5,4.5 11.5,15.3 0.7,15.3"/><polygon points="0.7,4.5 4.7,0.7 15.3,0.7 11.5,4.5"/><polygon points="11.5,4.5 15.3,0.7 15.3,11.3 11.5,15.3"/><polyline points="4.7,0.7 4.7,11.3 15.3,11.3"/><line x1="4.7" y1="11.3" x2="0.7" y2="15.3"/></g></svg><svg class="abs" style="left:739px;top:630px" width="16" height="16" viewBox="0 0 16 16"><polygon points="0.7,4.5 11.5,4.5 11.5,15.3 0.7,15.3" fill="#c3e2f8"/><g fill="none" stroke="#0b4f86" stroke-width="1.15" stroke-linejoin="round"><polygon points="0.7,4.5 11.5,4.5 11.5,15.3 0.7,15.3"/><polygon points="0.7,4.5 4.7,0.7 15.3,0.7 11.5,4.5"/><polygon points="11.5,4.5 15.3,0.7 15.3,11.3 11.5,15.3"/><polyline points="4.7,0.7 4.7,4.5"/><polyline points="11.5,11.3 15.3,11.3"/></g></svg><svg class="abs" style="left:764px;top:630px" width="16" height="16" viewBox="0 0 16 16"><polygon points="11.5,4.5 15.3,0.7 15.3,11.3 11.5,15.3" fill="#c3e2f8"/><g fill="none" stroke="#0b4f86" stroke-width="1.15" stroke-linejoin="round"><polygon points="0.7,4.5 11.5,4.5 11.5,15.3 0.7,15.3"/><polygon points="0.7,4.5 4.7,0.7 15.3,0.7 11.5,4.5"/><polygon points="11.5,4.5 15.3,0.7 15.3,11.3 11.5,15.3"/><polyline points="4.7,0.7 4.7,11.3 15.3,11.3"/><line x1="4.7" y1="11.3" x2="0.7" y2="15.3"/></g></svg><svg class="abs" style="left:789px;top:630px" width="16" height="16" viewBox="0 0 16 16"><polygon points="0.7,4.5 11.5,4.5 11.5,15.3 0.7,15.3" fill="#c3e2f8"/><polygon points="0.7,4.5 4.7,0.7 15.3,0.7 11.5,4.5" fill="#c3e2f8"/><polygon points="11.5,4.5 15.3,0.7 15.3,11.3 11.5,15.3" fill="#d4ebfb"/><g fill="none" stroke="#0b4f86" stroke-width="1.15" stroke-linejoin="round"><polygon points="0.7,4.5 11.5,4.5 11.5,15.3 0.7,15.3"/><polygon points="0.7,4.5 4.7,0.7 15.3,0.7 11.5,4.5"/><polygon points="11.5,4.5 15.3,0.7 15.3,11.3 11.5,15.3"/></g></svg><div class="abs" style="left:811px;top:628px;width:1px;height:20px;background:#8c8c8c"></div><svg class="abs" style="left:822px;top:630px" width="16" height="16" viewBox="0 0 16 16"><path d="M0.8 0.8 H15.2 V6.6 H11.6 V15.2 H4.4 V6.6 H0.8 Z" fill="#b7dcf6" stroke="#0b4f86" stroke-width="1.4" stroke-linejoin="round"/></svg><div class="abs" style="left:844px;top:628px;width:1px;height:20px;background:#8c8c8c"></div><div class="abs" style="left:850px;top:626px;width:25px;height:24px;background:#d4d4d4;border:1px solid #9c9c9c"></div><svg class="abs" style="left:855px;top:630px" width="16" height="16" viewBox="0 0 16 16"><polygon points="0.7,4.5 4.7,0.7 15.3,0.7 15.3,11.3 11.5,15.3 0.7,15.3" fill="#fff9d8"/><g fill="none" stroke="#7b7038" stroke-width="1.25" stroke-linejoin="round"><polygon points="0.7,4.5 11.5,4.5 11.5,15.3 0.7,15.3"/><polygon points="0.7,4.5 4.7,0.7 15.3,0.7 11.5,4.5"/><polygon points="11.5,4.5 15.3,0.7 15.3,11.3 11.5,15.3"/><polyline points="4.7,0.7 4.7,11.3 15.3,11.3"/><line x1="4.7" y1="11.3" x2="0.7" y2="15.3"/></g></svg><svg class="abs" style="left:880px;top:630px" width="16" height="16" viewBox="0 0 16 16"><polygon points="0.7,4.5 4.7,0.7 15.3,0.7 15.3,11.3 11.5,15.3 0.7,15.3" fill="#fff9d8"/><g fill="none" stroke="#7b7038" stroke-width="1.25" stroke-linejoin="round"><polygon points="0.7,4.5 11.5,4.5 11.5,15.3 0.7,15.3"/><polygon points="0.7,4.5 4.7,0.7 15.3,0.7 11.5,4.5"/><polygon points="11.5,4.5 15.3,0.7 15.3,11.3 11.5,15.3"/></g></svg><svg class="abs" style="left:905px;top:630px" width="16" height="16" viewBox="0 0 16 16"><polygon points="0.1,4.2 11.8,4.2 11.8,15.9 0.1,15.9" fill="#e4d8a6"/><polygon points="0.1,4.2 4.4,0.1 15.9,0.1 11.8,4.2" fill="#f6ecc4"/><polygon points="11.8,4.2 15.9,0.1 15.9,11.6 11.8,15.9" fill="#c6ba80"/></svg><svg class="abs" style="left:930px;top:630px" width="16" height="16" viewBox="0 0 16 16"><polygon points="0.7,4.5 11.5,4.5 11.5,15.3 0.7,15.3" fill="#e4d8a6"/><polygon points="0.7,4.5 4.7,0.7 15.3,0.7 11.5,4.5" fill="#f6ecc4"/><polygon points="11.5,4.5 15.3,0.7 15.3,11.3 11.5,15.3" fill="#c6ba80"/><g fill="none" stroke="#7b7038" stroke-width="1.25" stroke-linejoin="round"><polygon points="0.7,4.5 11.5,4.5 11.5,15.3 0.7,15.3"/><polygon points="0.7,4.5 4.7,0.7 15.3,0.7 11.5,4.5"/><polygon points="11.5,4.5 15.3,0.7 15.3,11.3 11.5,15.3"/></g></svg><div class="btn" style="left:734.6px;color:#9b9b9b;border-color:#dcdcdc;background:#f4f4f4;letter-spacing:-0.3px">&lt; Back</div><div class="btn" style="left:812.4px;letter-spacing:0.35px">Next &gt;</div><div class="btn" style="left:890.2px;letter-spacing:-0.35px">Cancel</div><div class="abs" style="left:970px;top:695.3px;width:2px;height:2px;background:#b8b8b8"></div><div class="abs" style="left:966.3px;top:699px;width:2px;height:2px;background:#b8b8b8"></div><div class="abs" style="left:970px;top:699px;width:2px;height:2px;background:#b8b8b8"></div><div class="abs" style="left:962.5px;top:702.8px;width:2px;height:2px;background:#b8b8b8"></div><div class="abs" style="left:966.3px;top:702.8px;width:2px;height:2px;background:#b8b8b8"></div><div class="abs" style="left:970px;top:702.8px;width:2px;height:2px;background:#b8b8b8"></div></div></body></html>
